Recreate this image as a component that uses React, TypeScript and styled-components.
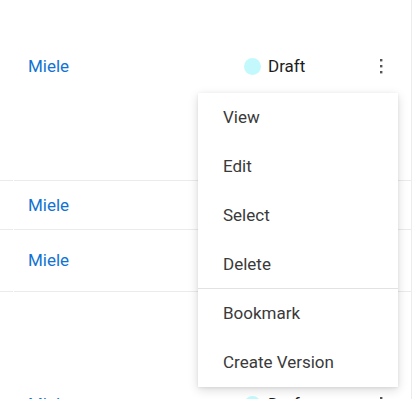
import React from "react";
import styled, { createGlobalStyle } from "styled-components";

const Global = createGlobalStyle`
  html, body { margin: 0; padding: 0; background: #fff; }
  body { font-family: Roboto, "Noto Sans", Arial, sans-serif; overflow: hidden; }
`;

const Page = styled.div`
  position: relative;
  width: 412px;
  height: 399px;
  overflow: hidden;
  box-sizing: border-box;
  border-right: 1px solid #ececec;
`;

const Row = styled.div<{ $h: number }>`
  display: flex;
  height: ${(p) => p.$h}px;
  box-sizing: border-box;
`;

const Gutter = styled.div<{ $border?: boolean }>`
  width: 13px;
  margin-right: 1px;
  border-bottom: ${(p) => (p.$border ? "1px solid #ebebeb" : "none")};
`;

const Cells = styled.div<{ $pt: number; $border?: boolean }>`
  flex: 1;
  display: flex;
  align-items: flex-start;
  padding-top: ${(p) => p.$pt}px;
  border-bottom: ${(p) => (p.$border ? "1px solid #ebebeb" : "none")};
`;

const NameCell = styled.div`
  width: 230px;
  padding-left: 14px;
  box-sizing: border-box;
  font-size: 17px;
  line-height: 20px;
  color: #1172d3;
`;

const StatusCell = styled.div`
  width: 134px;
  display: flex;
  align-items: center;
  gap: 7px;
  font-size: 17px;
  line-height: 20px;
  color: #1d1d1d;
`;

const Dot = styled.span`
  width: 17px;
  height: 17px;
  border-radius: 50%;
  background: #c3f9fd;
  flex: none;
`;

const ActionCell = styled.div`
  display: flex;
  align-items: center;
  height: 20px;
`;

const Kebab = () => (
  <svg width="6" height="16" viewBox="0 0 6 16" aria-hidden>
    <rect x="2" y="1" width="2.4" height="2.4" fill="#555" />
    <rect x="2" y="7" width="2.4" height="2.4" fill="#555" />
    <rect x="2" y="13" width="2.4" height="2.4" fill="#555" />
  </svg>
);

const Menu = styled.div`
  position: absolute;
  left: 198px;
  top: 93px;
  width: 200px;
  background: #fff;
  box-shadow: 0 3px 10px rgba(0, 0, 0, 0.14), 0 1px 3px rgba(0, 0, 0, 0.08);
  display: flex;
  flex-direction: column;
`;

const Item = styled.div`
  height: 48.75px;
  display: flex;
  align-items: center;
  padding-left: 25px;
  font-size: 17px;
  color: #3a3a3a;
`;

const Divider = styled.div`
  height: 1px;
  background: #e2e2e2;
`;

const rows = [
  { h: 181, pt: 56, border: true, status: true },
  { h: 49, pt: 14, border: true, status: false },
  { h: 62, pt: 20, border: true, status: false },
  { h: 160, pt: 102, border: false, status: true },
];

export default function App() {
  return (
    <>
      <Global />
      <Page>
        {rows.map((r, i) => (
          <Row key={i} $h={r.h}>
            <Gutter $border={r.border} />
            <Cells $pt={r.pt} $border={r.border}>
              <NameCell>Miele</NameCell>
              <StatusCell>
                {r.status && (
                  <>
                    <Dot />
                    <span>Draft</span>
                  </>
                )}
              </StatusCell>
              <ActionCell>{r.status && <Kebab />}</ActionCell>
            </Cells>
          </Row>
        ))}
        <Menu>
          <Item>View</Item>
          <Item>Edit</Item>
          <Item>Select</Item>
          <Item>Delete</Item>
          <Divider />
          <Item>Bookmark</Item>
          <Item>Create Version</Item>
        </Menu>
      </Page>
    </>
  );
}
